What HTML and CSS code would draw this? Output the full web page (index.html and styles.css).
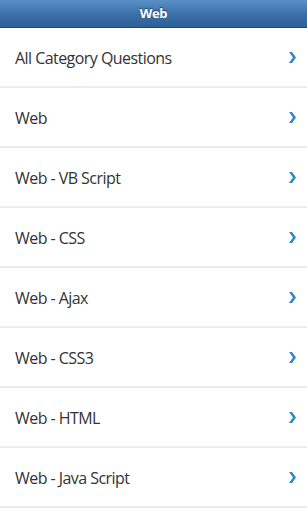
FILE: index.html
```html
<!DOCTYPE html>
<html lang="en">
<head>
<meta charset="UTF-8">
<meta name="viewport" content="width=device-width, initial-scale=1.0">
<title>Web</title>
<link rel="stylesheet" href="styles.css">
</head>
<body>
<div class="header">Web</div>
<ul class="list">
  <li class="item"><span>All Category Questions</span><svg class="chev" viewBox="0 0 7 11"><path d="M0 0h3l4 5.5-4 5.5h-3l4-5.5z"/></svg></li>
  <li class="item"><span>Web</span><svg class="chev" viewBox="0 0 7 11"><path d="M0 0h3l4 5.5-4 5.5h-3l4-5.5z"/></svg></li>
  <li class="item"><span>Web - VB Script</span><svg class="chev" viewBox="0 0 7 11"><path d="M0 0h3l4 5.5-4 5.5h-3l4-5.5z"/></svg></li>
  <li class="item"><span>Web - CSS</span><svg class="chev" viewBox="0 0 7 11"><path d="M0 0h3l4 5.5-4 5.5h-3l4-5.5z"/></svg></li>
  <li class="item"><span>Web - Ajax</span><svg class="chev" viewBox="0 0 7 11"><path d="M0 0h3l4 5.5-4 5.5h-3l4-5.5z"/></svg></li>
  <li class="item"><span>Web - CSS3</span><svg class="chev" viewBox="0 0 7 11"><path d="M0 0h3l4 5.5-4 5.5h-3l4-5.5z"/></svg></li>
  <li class="item"><span>Web - HTML</span><svg class="chev" viewBox="0 0 7 11"><path d="M0 0h3l4 5.5-4 5.5h-3l4-5.5z"/></svg></li>
  <li class="item"><span>Web - Java Script</span><svg class="chev" viewBox="0 0 7 11"><path d="M0 0h3l4 5.5-4 5.5h-3l4-5.5z"/></svg></li>
</ul>
</body>
</html>
```

FILE: styles.css
```css
body {
  margin: 0;
  padding: 0;
  background: #fff;
  font-family: "Open Sans", "Noto Sans", sans-serif;
  color: #333;
  overflow: hidden;
}
.header {
  height: 27px;
  line-height: 26px;
  text-align: center;
  color: #fff;
  font-weight: bold;
  font-size: 13px;
  letter-spacing: -0.3px;
  background: linear-gradient(#5b8fc7, #3b6fa8 55%, #2d5f98);
  border-bottom: 1px solid #1f4775;
  text-shadow: 0 -1px 1px #1a3a60;
}
.list {
  list-style: none;
  margin: 0;
  padding: 0;
}
.item {
  display: flex;
  align-items: center;
  justify-content: space-between;
  height: 58px;
  padding: 0 11px 0 15px;
  border-bottom: 2px solid #ececec;
  font-size: 16px;
  letter-spacing: -0.55px;
}
.item span {
  margin-top: 1px;
}
.chev {
  width: 7px;
  height: 11px;
  fill: #2a86c4;
}
```
